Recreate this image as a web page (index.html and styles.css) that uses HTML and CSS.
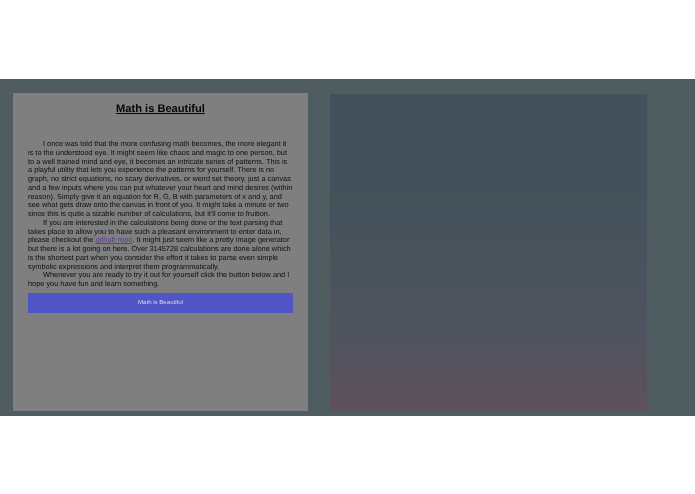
FILE: index.html
```html
<!DOCTYPE html>
<html lang="en">
<head>
<meta charset="utf-8">
<title>Math is Beautiful</title>
<link rel="stylesheet" href="styles.css">
</head>
<body>
<main class="stage">
  <section class="panel">
    <h1 class="title">Math is Beautiful</h1>
    <div class="copy">
      <p>I once was told that the more confusing math becomes, the more elegant it is to the understood eye. It might seem like chaos and magic to one person, but to a well trained mind and eye, it becomes an intricate series of patterns. This is a playful utility that lets you experience the patterns for yourself. There is no graph, no strict equations, no scary derivatives, or weird set theory, just a canvas and a few inputs where you can put whatever your heart and mind desires (within reason). Simply give it an equation for R, G, B with parameters of x and y, and see what gets draw onto the canvas in front of you. It might take a minute or two since this is quite a sizable number of calculations, but it'll come to fruition.</p>
      <p>If you are interested in the calculations being done or the text parsing that takes place to allow you to have such a pleasant environment to enter data in, please checkout the <a class="link" href="#">github repo</a>. It might just seem like a pretty image generator but there is a lot going on here. Over 3145728 calculations are done alone which is the shortest part when you consider the effort it takes to parse even simple symbolic expressions and interpret them programmatically.</p>
      <p>Whenever you are ready to try it out for yourself click the button below and I hope you have fun and learn something.</p>
    </div>
    <button class="cta" type="button">Math is Beautiful</button>
  </section>
  <div class="canvas"></div>
</main>
</body>
</html>
```

FILE: styles.css
```css
html, body {
  margin: 0;
  padding: 0;
  background: #fff;
}
body {
  padding: 79px 0 78px;
  font-family: "Liberation Sans", Arial, sans-serif;
  text-rendering: geometricPrecision;
}
.stage {
  box-sizing: border-box;
  height: 337px;
  padding: 14px 48px 5px 13px;
  display: flex;
  gap: 22px;
  background: #4f5d60;
}
.panel {
  box-sizing: border-box;
  width: 295px;
  padding: 9px 15px 0;
  background: #7f7f7f;
  color: #0e0e0e;
  filter: blur(0.4px);
}
.title {
  margin: 0 0 24px;
  font-size: 11.1px;
  line-height: 14px;
  font-weight: 700;
  text-align: center;
  text-decoration: underline;
  color: #050505;
}
.copy {
  font-size: 7.36px;
  line-height: 8.75px;
}
.copy p {
  margin: 0;
  text-indent: 15px;
}
.link {
  color: #5f3a96;
}
.cta {
  display: block;
  width: 100%;
  height: 20.5px;
  margin-top: 4px;
  padding: 0 0 3px;
  border: 0;
  background: #5055c8;
  color: #d8d8ee;
  font-family: inherit;
  font-size: 6.1px;
}
.canvas {
  width: 317px;
  margin-top: 1px;
  background: linear-gradient(180deg, #43525a 0%, #43525a 30%, #4f545f 75%, #5d515b 100%);
  filter: blur(0.5px);
}
```
